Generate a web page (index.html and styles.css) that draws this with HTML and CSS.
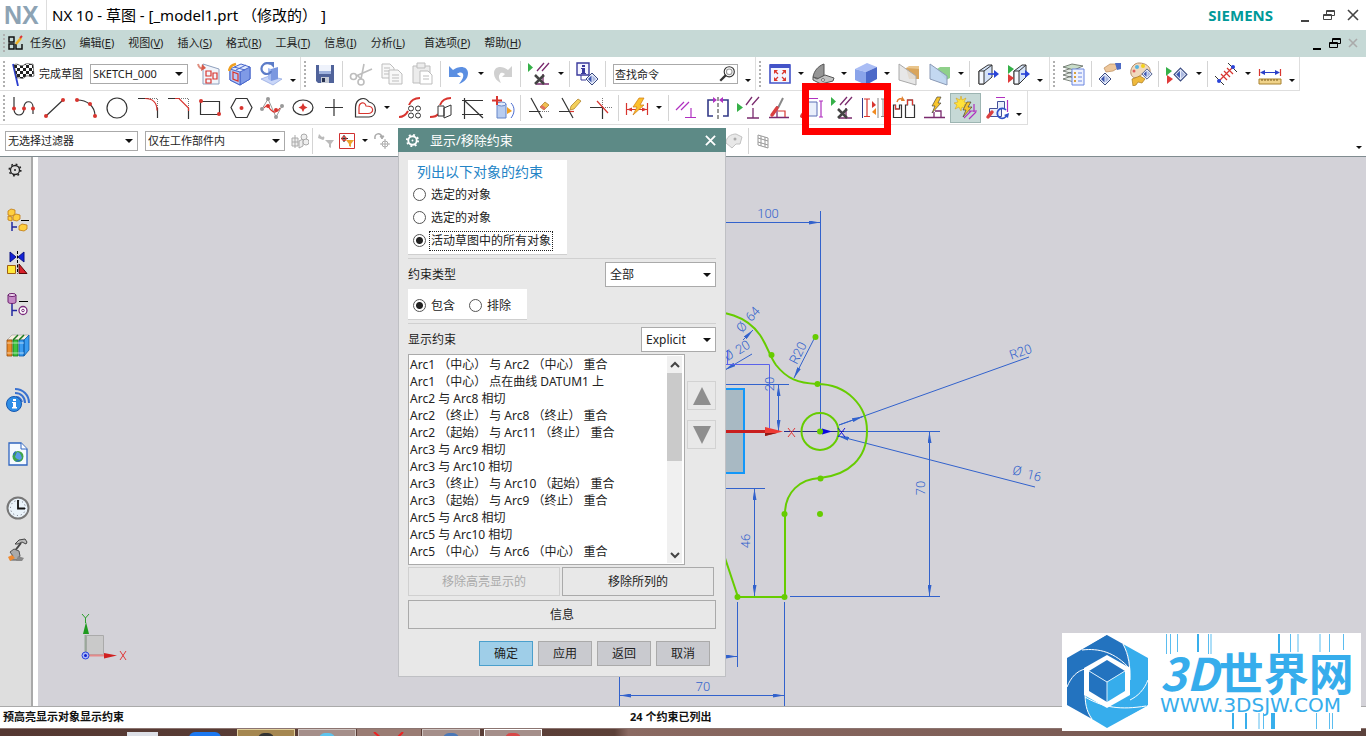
FILE: index.html
```html
<!DOCTYPE html>
<html lang="zh-CN">
<head>
<meta charset="utf-8">
<title>NX 10 - 草图 - [_model1.prt （修改的） ]</title>
<link rel="stylesheet" href="styles.css">
</head>
<body>
<svg class="defs" aria-hidden="true">
  <defs>
    <symbol id="i-remove-con" viewBox="0 0 24 24"><path class="gf" d="M1 1l5 4.500L1 10z"/><path class="p" d="M10 9l7-8M15 9l7-8M16 12v10M9 22h13"/><path class="x" d="M8 13l9 9M17 13l-9 9"/></symbol>
    <symbol id="i-cube" viewBox="0 0 24 24"><path fill="#aabdf5" d="M1 7L13 1l10 4-11 5z"/><path fill="#8aa4ea" d="M1 7l11 3v13L1 18z"/><path fill="#4c69c8" d="M12 10l11-5v12l-11 6z"/></symbol>
    <symbol id="i-diamond" viewBox="0 0 14 14"><path fill="#e6ecfa" stroke="#3a4a80" d="M7 1l6 6-6 6-6-6z"/><path fill="#3c56b0" d="M6.500 3.500v7L3 7z"/><path fill="#aab8e0" d="M7.500 3.500v7L11 7z"/></symbol>
    <symbol id="i-restore" viewBox="0 0 12 12"><path fill="none" stroke="currentColor" stroke-width="1" d="M.5 5.500h8v5h-8zM.5 6.500h8M3.500 5V1.500h8v5H9M3.500 2.500h8"/></symbol>
    <pattern id="chk" width="6" height="6" patternUnits="userSpaceOnUse"><path fill="#fff" d="M0 0h6v6H0z"/><path fill="#222" d="M0 0h3v3H0zM3 3h3v3H3z"/></pattern>
    <marker id="arr" viewBox="0 0 11 4" refX="11" refY="2" markerWidth="11" markerHeight="4" markerUnits="userSpaceOnUse" orient="auto-start-reverse"><path fill="#3262cc" d="M0 0l11 2-11 2z"/></marker>
  </defs>
</svg>
<div class="app">
  <header class="titlebar">
    <span class="nx">NX</span>
    <h1>NX 10 - 草图 - [_model1.prt （修改的） ]</h1>
    <span class="brand">SIEMENS</span>
    <div class="winctl">
      <button aria-label="最小化"><i class="min"></i></button>
      <button aria-label="还原"><svg width="12" height="12"><use href="#i-restore"/></svg></button>
      <button aria-label="关闭"><svg width="12" height="12" viewBox="0 0 12 12"><path stroke="currentColor" stroke-width="1.600" d="M1 1l10 10M11 1L1 11"/></svg></button>
    </div>
  </header>

  <nav class="menubar">
    <i class="grip"></i>
    <svg class="appicon" viewBox="0 0 16 16"><path fill="none" stroke="#111" stroke-width="1.500" d="M1 2h5v5H1zM1 9h5v5H1zM8 9v5h6V9"/><path stroke="#f0b020" stroke-width="2.500" d="M8 9l5-6"/><path stroke="#d33" stroke-width="2" d="M12 3l2-2"/></svg>
    <div class="menus">
      <a href="#">任务(<u>K</u>)</a><a href="#">编辑(<u>E</u>)</a><a href="#">视图(<u>V</u>)</a><a href="#">插入(<u>S</u>)</a><a href="#">格式(<u>R</u>)</a><a href="#">工具(<u>T</u>)</a><a href="#">信息(<u>I</u>)</a><a href="#">分析(<u>L</u>)</a><a href="#" class="wide">首选项(<u>P</u>)</a><a href="#">帮助(<u>H</u>)</a>
    </div>
    <div class="winctl child">
      <button aria-label="最小化文档"><i class="min"></i></button>
      <button aria-label="还原文档"><svg width="12" height="12"><use href="#i-restore"/></svg></button>
      <button aria-label="关闭文档" disabled><svg width="10" height="10" viewBox="0 0 10 10"><path stroke="currentColor" stroke-width="1.600" d="M1 1l8 8M9 1L1 9"/></svg></button>
    </div>
  </nav>

  <div class="toolrow">
    <div class="group">
      <i class="grip"></i>
      <button class="finish"><svg class="i" viewBox="0 0 24 24"><path stroke="#2b3ed0" stroke-width="1.800" d="M2 2l5 22"/><path fill="url(#chk)" stroke="#222" stroke-width=".6" d="M3 3c4-3 6 3 10 0s6 0 9-1l1 12c-4 2-6-2-9 1s-5 0-8 1z"/></svg><span>完成草图</span></button>
      <span class="combo sketch"><select aria-label="草图名称"><option>SKETCH_000</option></select></span>
      <button class="tb" aria-label="定向到草图"><svg class="i" viewBox="0 0 24 24"><path fill="#f2f5fb" stroke="#8fa0bd" d="M6 2l16 5v15H6z"/><path class="r" d="M9 9h5v5H9zM9 17h5v4H9zM16 11h4v6h-4z"/><path stroke="#e09080" fill="none" stroke-width="2" d="M1 2c1 4 3 5 6 4"/><path fill="#d75a4a" d="M5 2l4 4-5 3z"/></svg></button>
      <button class="tb" aria-label="定向到模型"><svg class="i" viewBox="0 0 24 24"><path fill="#dfe8fc" stroke="#4867cc" d="M2 7l11-5 9 3v12l-10 6-10-5z"/><path fill="#7f9ae6" stroke="#4867cc" d="M12 10l10-5v12l-10 6z"/><path fill="#b4c6f6" stroke="#4867cc" d="M2 7l10 3v13L2 18z"/><path fill="none" stroke="#4867cc" d="M6 5l11 3M18 3L8 8"/><path class="r" d="M5 10l5 2v7l-5-2z"/><path fill="none" stroke="#f0a020" stroke-width="2.500" d="M1 9c1-5 3-6 7-7"/></svg></button>
      <button class="tb" aria-label="重新附着"><svg class="i" viewBox="0 0 24 24"><path fill="#c9d6f8" stroke="#7f98da" stroke-width=".6" d="M2 17l8-3 13 3-9 6z"/><path fill="#7b98e0" d="M12 7l7-2v12l-7 2z"/><path fill="#a4bbf2" d="M9 6l3 1v12l-3-2z"/><path fill="none" stroke="#5c7cc8" stroke-width="2.200" d="M12 2C6-1 1 4 3 9c2 4 8 4 9 0"/><path fill="#5c7cc8" d="M9 0h6v6z"/></svg></button>
      <button class="dd low" aria-label="更多"></button>
    </div>
    <div class="group">
      <i class="grip"></i>
      <button class="tb" aria-label="保存"><svg class="i" viewBox="0 0 24 24"><path fill="#50639a" d="M3 3h18v18H5l-2-2z"/><path fill="#eef2fb" d="M6 3h12v9H6z"/><path fill="#9fb2dd" d="M6 9h12v3H6z"/><path fill="#c6cbd6" d="M8 15h8v6H8z"/><path fill="#26314f" d="M9 16h3v4H9z"/></svg></button>
      <i class="sep"></i>
      <button class="tb" aria-label="剪切" disabled><svg class="i" viewBox="0 0 24 24"><g fill="none" stroke="#bdbdbd" stroke-width="1.600"><circle cx="4.500" cy="14.500" r="3"/><circle cx="12" cy="20" r="3"/><path d="M7 14l16-7M12 17l3-15M12 17l-4-4"/></g></svg></button>
      <button class="tb" aria-label="复制" disabled><svg class="i" viewBox="0 0 24 24"><g fill="#f8f8f8" stroke="#bdbdbd"><path d="M2 2h8l4 4v10H2z"/><path d="M9 8h9l4 4v10H9z"/><path d="M4 6h6M4 9h5M4 12h5M12 13h7M12 16h7M12 19h7"/></g></svg></button>
      <button class="tb" aria-label="粘贴" disabled><svg class="i" viewBox="0 0 24 24"><g fill="#ececec" stroke="#bdbdbd"><path d="M2 4h17v17H2z"/><path d="M6 1h8v5H6z"/><path fill="#fff" d="M9 9h8l4 4v9H9zM12 14h6M12 17h6"/></g></svg></button>
      <i class="sep"></i>
      <button class="tb" aria-label="撤销"><svg class="i" viewBox="0 0 24 24"><path fill="#5b8fe2" d="M2 4l4 4c6-5 15-4 15 3 0 6-4 9-9 11 3-4 5-7 4-10-1-2-4-2-6 0l4 3H2z"/></svg></button>
      <button class="dd" aria-label="撤销列表"></button>
      <button class="tb" aria-label="重做" disabled><svg class="i" viewBox="0 0 24 24"><path fill="#d0d0d0" d="M21 4l-4 4C11 3 3 4 3 11c0 5 3 8 7 10-2-4-3-7-1-9 1-2 3-1 5 0l-3 3h10z"/></svg></button>
      <i class="sep"></i>
      <button class="tb" aria-label="显示/移除约束"><svg class="i"><use href="#i-remove-con"/></svg></button>
      <button class="dd" aria-label="约束列表"></button>
      <i class="sep"></i>
      <button class="tb" aria-label="信息"><svg class="i" viewBox="0 0 24 24"><path fill="#f5f5ff" stroke="#3a3a9c" stroke-width="1.400" d="M1 1h12v12H1z"/><path fill="#3a3a9c" d="M6 3h3v2H6zM5 6h4v5h1v1H5v-1h1V7H5z"/><path fill="none" stroke="#3a3a9c" d="M5 13v5h5"/><use href="#i-diamond" x="9" y="10" width="14" height="14"/></svg></button>
      <i class="sep"></i>
      <label class="search"><input type="text" value="查找命令" aria-label="查找命令"><svg class="lens" viewBox="0 0 16 16"><g fill="none" stroke="#333"><circle cx="10" cy="6" r="4.500"/><circle cx="10" cy="6" r="2.500" stroke="#999"/><path stroke-width="2" d="M7 9l-5 5"/></g></svg></label>
      <button class="dd low" aria-label="更多"></button>
    </div>
    <div class="group tight">
      <i class="grip"></i>
      <button class="tb" aria-label="适合窗口"><svg class="i" viewBox="0 0 24 24"><path fill="#f2f5ff" stroke="#4353c8" stroke-width="1.600" d="M2 3h20v18H2z"/><path fill="#4353c8" d="M2 2h20v4H2z"/><g fill="#df3a2c"><path d="M6 8h4l-4 4zM18 8h-4l4 4zM6 19h4l-4-4zM18 19h-4l4-4z"/></g><path class="r" d="M7 9l3 3M17 9l-3 3M7 18l3-3M17 18l-3-3"/></svg></button>
      <button class="dd" aria-label="视图"></button>
      <button class="tb" aria-label="编辑截面"><svg class="i" viewBox="0 0 24 24"><path fill="#959595" stroke="#555" d="M2 15C3 9 7 4 13 2v11l-4 4z"/><path fill="#c2c2c2" stroke="#555" d="M2 15l4 2 8-4 9 3-1 3-12 3-8-4z"/><circle cx="12" cy="18" r="1.500" fill="#eee" stroke="#777"/></svg></button>
      <button class="dd" aria-label="截面"></button>
      <button class="tb" aria-label="着色"><svg class="i"><use href="#i-cube"/></svg></button>
      <button class="dd" aria-label="渲染样式"></button>
      <button class="tb" aria-label="剪切截面"><svg class="i" viewBox="0 0 24 24"><path fill="#d9a55c" d="M9 6h13v11H12z"/><path fill="#e9c58c" d="M9 6l3-2h10v3z"/><path fill="#e3e3e3" fill-opacity=".85" stroke="#aaa" d="M2 2l17 12v9L2 18z"/></svg></button>
      <button class="tb" aria-label="编辑工作截面"><svg class="i" viewBox="0 0 24 24"><path fill="#8fd08a" d="M9 7l3-2h10v11l-4 2z"/><path fill="#bcd4f0" fill-opacity=".9" stroke="#8a99b5" d="M2 2l17 12v9L2 17z"/></svg></button>
      <button class="dd" aria-label="截面列表"></button>
      <i class="sep"></i>
      <button class="tb" aria-label="移动"><svg class="i" viewBox="0 0 24 24"><path fill="#d5e3f8" stroke="#333" d="M3 9l9-6h4v12l-8 7H3z"/><path fill="#f4f8ff" stroke="#333" d="M3 9h5v13H3zM8 9l8-6"/><path fill="none" stroke="#2a44d8" stroke-width="1.600" d="M12 12h7"/><path fill="#2a44d8" d="M18 8l5 4-5 4z"/></svg></button>
      <button class="tb" aria-label="移至图层"><svg class="i" viewBox="0 0 24 24"><path fill="#d5e3f8" stroke="#333" d="M7 9l8-6h4v12l-7 7H7z"/><path fill="#f4f8ff" stroke="#333" d="M7 9h5v13H7zM12 9l7-6"/><path class="gf" d="M1 3l6 4-6 5z"/><path fill="#df3a3a" d="M1 12l6 4-6 5z"/><path stroke="#2a44d8" stroke-width="1.600" d="M14 12h5"/><path fill="#2a44d8" d="M18 8l5 4-5 4z"/></svg></button>
      <button class="dd low" aria-label="更多"></button>
    </div>
    <div class="group">
      <i class="grip"></i>
      <button class="tb" aria-label="图层设置"><svg class="i" viewBox="0 0 24 24"><g fill="#e8eee8" stroke="#5d665d" stroke-width=".8"><path d="M1 17l9-3 11 2-9 4zM1 13l9-3 11 2-9 4zM1 9l9-3 11 2-9 4z"/><path fill="#c8dcc8" d="M1 5l9-3 11 2-9 4z"/></g><path fill="#eef2ff" stroke="#6a86e0" d="M10 7h12v16H10z"/><path stroke="#6a86e0" d="M16 11h4M16 15h4M16 19h4"/><path fill="#d8a040" d="M12 10h2v2h-2zM12 14h2v2h-2zM12 18h2v2h-2z"/></svg></button>
      <i class="sep"></i>
      <button class="tb" aria-label="显示和隐藏"><svg class="i" viewBox="0 0 24 24"><path fill="#eec79b" stroke="#b98a58" stroke-width=".7" d="M6 6l6-4h6l2 4-5 3-7 1z"/><path fill="#4d6bc4" d="M17 1h6v6l-4 1z"/><use href="#i-diamond" x="0" y="10" width="14" height="14"/></svg></button>
      <button class="tb" aria-label="编辑对象显示"><svg class="i" viewBox="0 0 24 24"><path fill="#f0d9bd" stroke="#b58d66" d="M10 1c7 0 12 4 11 9-2 4-6 1-9 3-3 1-2 3-5 3-4 0-6-4-5-8s4-7 8-7z"/><circle cx="8" cy="5" r="2" fill="#56b4e0"/><circle cx="14" cy="4" r="2" fill="#f3d21c"/><circle cx="5" cy="9" r="1.500" fill="#e05a5a"/><path fill="#efb93c" stroke="#a87a20" stroke-width=".7" d="M3 17l8-3 5 3-3 4-4-1-2 3-3 1z"/><use href="#i-diamond" x="12" y="6" width="12" height="12"/></svg></button>
      <i class="sep"></i>
      <button class="tb" aria-label="隐藏"><svg class="i" viewBox="0 0 24 24"><path class="gf" d="M1 5l6 4-6 5z"/><path fill="#df3a3a" d="M2 13l6 4-6 5z"/><use href="#i-diamond" x="8" y="5" width="15" height="15"/></svg></button>
      <button class="dd" aria-label="显示列表"></button>
      <i class="sep"></i>
      <button class="tb" aria-label="简单测量"><svg class="i" viewBox="0 0 24 24"><path stroke="#333" d="M1 14l9 9M14 1l9 9"/><path class="r" d="M5 19L19 5M7 12l6 6M10 9l6 6M13 6l6 6"/><circle cx="5" cy="19" r="2" fill="#2a44d8"/><circle cx="19" cy="5" r="2" fill="#2a44d8"/></svg></button>
      <button class="dd" aria-label="测量列表"></button>
      <button class="tb" aria-label="测量距离"><svg class="i" viewBox="0 0 24 24"><path class="r" d="M1.500 7v7M22.500 7v7"/><path stroke="#2a3fc8" d="M3 10.500h18"/><path fill="#2a3fc8" d="M2 10.500L7 8v5zM22 10.500L17 8v5z"/><path fill="#f0d38a" stroke="#a9822f" d="M1 17h22v5H1z"/><path stroke="#7a5a18" d="M4 17v2M7 17v2M10 17v2M13 17v2M16 17v2M19 17v2"/></svg></button>
      <button class="dd low" aria-label="更多"></button>
    </div>
  </div>

  <div class="toolrow">
    <div class="group loose">
      <i class="grip"></i>
      <button class="tb" aria-label="轮廓"><svg class="i" viewBox="0 0 24 24"><path class="k" d="M2 1v12c0 8 10 8 10 0V11c0-7 9-7 9 0v7"/><circle class="rf" cx="2" cy="12.500" r="2"/><circle class="rf" cx="12" cy="12.500" r="2"/><circle class="rf" cx="21" cy="12.500" r="2"/></svg></button>
      <button class="tb" aria-label="直线"><svg class="i" viewBox="0 0 24 24"><path class="k" d="M3 20L20 4"/><circle class="rf" cx="3" cy="20" r="2"/><circle class="rf" cx="20" cy="4" r="2"/></svg></button>
      <button class="tb" aria-label="圆弧"><svg class="i" viewBox="0 0 24 24"><path class="k" d="M3 4c10 0 18 6 18 16"/><circle class="rf" cx="3" cy="4" r="2"/><circle class="rf" cx="16" cy="8" r="2"/><circle class="rf" cx="21" cy="20" r="2"/></svg></button>
      <button class="tb" aria-label="圆"><svg class="i" viewBox="0 0 24 24"><circle class="k" cx="12" cy="12" r="10"/></svg></button>
      <button class="tb" aria-label="圆角"><svg class="i" viewBox="0 0 24 24"><path class="k" d="M2 2.500h10M21.500 12v10"/><path class="dot" d="M12 2.500h9.500V12"/><path class="r" d="M9 2.500c8 0 12 4 12 12"/></svg></button>
      <button class="tb" aria-label="倒斜角"><svg class="i" viewBox="0 0 24 24"><path class="k" d="M1 2.500h11M21.500 12v11"/><path class="dot" d="M12 2.500h9.500V12"/><path class="r" d="M8 2.500h4l9.500 9.500v3"/></svg></button>
      <button class="tb" aria-label="矩形"><svg class="i" viewBox="0 0 24 24"><path class="k" d="M2.500 5.500h19v13h-19z"/><circle class="rf" cx="3" cy="5" r="2"/><circle class="rf" cx="21" cy="18" r="2"/></svg></button>
      <button class="tb" aria-label="多边形"><svg class="i" viewBox="0 0 24 24"><path class="k" d="M7 2.500h11l5 9-5 10H7l-5-10z"/><circle class="rf" cx="12.500" cy="12" r="2"/></svg></button>
      <button class="tb" aria-label="艺术样条"><svg class="i" viewBox="0 0 24 24"><path fill="none" stroke="#999" d="M2 13L8 3l8 18 6-11"/><path class="r" d="M4 12c4-5 4-1 7 2s6 3 9-2"/><g fill="#999"><circle cx="2" cy="13" r="2"/><circle cx="8" cy="3" r="2"/><circle cx="16" cy="21" r="2"/><circle cx="22" cy="10" r="2"/></g><circle class="rf" cx="8" cy="10" r="2"/><circle class="rf" cx="16" cy="14" r="2"/></svg></button>
      <button class="tb" aria-label="椭圆"><svg class="i" viewBox="0 0 24 24"><ellipse class="k" cx="12" cy="11.500" rx="10" ry="7.500"/><path class="rf" d="M12 7l1.500 3 3 1.500-3 1.500-1.500 3-1.500-3-3-1.500 3-1.500z"/></svg></button>
      <button class="tb" aria-label="点"><svg class="i" viewBox="0 0 24 24"><path class="k" d="M12 3v17M3 11.500h18"/></svg></button>
      <button class="tb" aria-label="偏置曲线"><svg class="i" viewBox="0 0 24 24"><path class="k" d="M2.500 21V11C3 2 12 0 16 6c9 2 8 15 0 15z"/><path class="r" d="M6 17.500V12c0-6 6-7 7-2 9 0 8 7.500 2 7.500z"/></svg></button>
      <button class="dd" aria-label="曲线列表"></button>
      <button class="tb" aria-label="阵列曲线"><svg class="i" viewBox="0 0 24 24"><path class="r thick" d="M1 21c5 0 7-2 9-6M11 9c2-5 5-7 11-7"/><g fill="#fff" stroke="#333"><circle cx="13" cy="12.500" r="2.500"/><circle cx="20" cy="12.500" r="2.500"/><circle cx="13" cy="19.500" r="2.500"/><circle cx="20" cy="19.500" r="2.500"/></g></svg></button>
      <button class="tb" aria-label="镜像曲线"><svg class="i" viewBox="0 0 24 24"><path class="r thick" d="M1 21c4 0 7-1 8-3M11 9c2-5 5-7 11-7"/><path fill="#fff" stroke="#333" d="M9 10h6v10H9zM15 12l7-3v10l-7 3z"/></svg></button>
      <button class="tb" aria-label="交点"><svg class="i" viewBox="0 0 24 24"><path class="k" d="M4.500 2v21M2 4.500h21M2 18.500h21M5 5l18 17"/></svg></button>
      <button class="tb" aria-label="投影曲线"><svg class="i" viewBox="0 0 24 24"><path fill="#b8cdf0" stroke="#6485c8" d="M6 8h9v14H6z"/><ellipse cx="10.500" cy="8" rx="4.500" ry="2" fill="#e2ecfb" stroke="#6485c8"/><path class="r thick" d="M6 0v9M1 4.500h10"/><path fill="none" stroke="#4a6bd0" d="M20 7c4 4 4 10 0 15"/><path fill="#f0a020" d="M16 11l5 4-5 3z"/></svg></button>
      <i class="sep"></i>
      <button class="tb" aria-label="快速修剪"><svg class="i" viewBox="0 0 24 24"><path class="k" d="M4 2l11 20M2 15.500h11"/><path class="dot" d="M13 15.500h10"/><path fill="#f0c050" stroke="#a87820" stroke-width=".7" d="M13 11l5-5 4 3-5 5z"/><path fill="#e07060" d="M13 11l2-2 4 3-2 2z"/></svg></button>
      <button class="tb" aria-label="快速延伸"><svg class="i" viewBox="0 0 24 24"><path class="k" d="M4 2l11 20M1 15.500h11"/><path class="r" d="M12 15.500h4"/><path fill="#f3cf5a" stroke="#a87820" stroke-width=".7" d="M12 14l1-4 7-7 3 2-7 8z"/></svg></button>
      <button class="tb" aria-label="制作拐角"><svg class="i" viewBox="0 0 24 24"><path class="k" d="M1 11.500h13M13.500 11v12"/><path class="dot" d="M14 11.500h9M13.500 11V1"/><path class="r" d="M8 5l11 12"/></svg></button>
      <i class="sep"></i>
      <button class="tb" aria-label="快速尺寸"><svg class="i" viewBox="0 0 24 24"><path class="r" d="M1.500 7v12M22.500 7v12M2 13.500h20"/><path class="rf" d="M2 13.500l5-2v4zM22 13.500l-5-2v4z"/><path fill="#fbc02d" stroke="#d07a10" stroke-width=".7" d="M14 2h5l-4 7h4L8 19l4-8H8z"/></svg></button>
      <button class="dd" aria-label="尺寸列表"></button>
      <i class="sep"></i>
      <button class="tb" aria-label="几何约束"><svg class="i" viewBox="0 0 24 24"><path class="m" d="M1 14l8-8M6 14l8-8M16 12v9M10 21.500h11"/></svg></button>
      <button class="tb" aria-label="设为对称"><svg class="i" viewBox="0 0 24 24"><path fill="none" stroke="#333a88" stroke-width="1.600" d="M7 4H2v16h5M17 4h5v16h-5"/><path fill="none" stroke="#333" stroke-dasharray="4 2" d="M12 1v22"/><path fill="#b030c0" d="M7 1l4 3-4 3zM17 1l-4 3 4 3z"/></svg></button>
      <button class="tb" aria-label="显示草图约束"><svg class="i" viewBox="0 0 24 24"><path class="gf" d="M0 7l6 4.500L0 16z"/><path class="p" d="M9 9l6-8M15 9l7-8M16 12v10M10 22h12"/></svg></button>
      <button class="tb" aria-label="约束设置"><svg class="i" viewBox="0 0 24 24"><path class="p" d="M9 10v11M1 21.500h20"/><path class="r" d="M10 15h7v6"/><path stroke="#888" stroke-width="2" d="M15 2l-5 10"/><path stroke="#d94040" stroke-width="3.500" stroke-linecap="round" d="M9 12l-5 7"/></svg></button>
      <button class="tb" aria-label="自动尺寸"><svg class="i" viewBox="0 0 24 24"><path fill="#eaf0fb" stroke="#5a6fb5" d="M9 6h9v14H9z"/><path class="m" d="M8 2.500h11M22 5v16M20 5h4M20 21h4"/><path stroke="#d94040" stroke-width="4" stroke-linecap="round" d="M7 14l-4 6"/></svg></button>
      <button class="tb" aria-label="显示/移除约束"><svg class="i"><use href="#i-remove-con"/></svg></button>
      <button class="tb" aria-label="动画尺寸"><svg class="i" viewBox="0 0 24 24"><path stroke="#333a88" d="M1.500 2v20"/><path class="r" d="M6 3v17M3 3h6M3 20.500h6"/><path fill="none" stroke="#888" d="M17 2v20M22 3v17M20 3h4M20 20.500h4"/><path class="rf" d="M11 5l4 4-4 3z"/><path fill="#f08a20" d="M15 12l-4 4 4 3z"/></svg></button>
      <button class="tb" aria-label="转换参考"><svg class="i" viewBox="0 0 24 24"><path class="k" d="M1.500 9v12.500h8V9h-2v4h-4V9zM13.500 11v10.500h9V9h-2V4h-5v5h-2z"/><path class="r" d="M3.500 9v4h4M15.500 9V4h5v5"/><path fill="none" stroke="#e08030" stroke-width="1.500" d="M5 6c1-4 4-4 7-2"/><path fill="#e08030" d="M10 0l3 5-4 0z"/></svg></button>
      <button class="tb" aria-label="自动判断约束"><svg class="i" viewBox="0 0 24 24"><path class="p" d="M1 21.500h21M11 16v6"/><path class="p" d="M12 15h6v6"/><path fill="#f7c52c" stroke="#333" stroke-width=".6" d="M14 1h4l-3 6h3L9 17l3-7H9z"/></svg></button>
      <button class="tb on" aria-label="创建自动判断约束" aria-pressed="true"><svg class="i" viewBox="0 0 24 24"><path class="m" d="M10 22l7-7M15 23l7-7M20 8v8M15 15h8"/><path fill="#ffe23a" stroke="#d09a10" stroke-width=".5" d="M7 0l1 4 4-2-2 4 4 1-4 2 2 4-4-2-1 4-2-4-4 2 2-4-3-2 4-1-2-4 4 2z"/><path fill="#f7c52c" stroke="#333" stroke-width=".6" d="M13 6h4l-3 5h4L9 21l3-7H9z"/></svg></button>
      <button class="tb" aria-label="连续自动标注"><svg class="i" viewBox="0 0 24 24"><path fill="#eaf0fb" stroke="#44509a" d="M12.500 5.500h7v7h-3v8h-12v-8h8z"/><path class="m" d="M11 1.500h9M22.500 4v12"/><path fill="none" stroke="#2f50c8" stroke-width="1.800" d="M21 14a5 5 0 1 0 1 5"/><path fill="#2f50c8" d="M24 17l-1 5-4-3z"/><path stroke="#d94040" stroke-width="3.500" stroke-linecap="round" d="M7 16l-4 5"/></svg></button>
      <button class="dd low" aria-label="更多"></button>
      <div class="callout"></div>
    </div>
  </div>

  <div class="toolrow filters">
    <span class="combo f1"><select aria-label="类型过滤器"><option>无选择过滤器</option></select></span>
    <span class="combo f2"><select aria-label="选择范围"><option>仅在工作部件内</option></select></span>
    <button class="sb" aria-label="装配过滤" disabled><svg viewBox="0 0 18 18"><g fill="#eee" stroke="#aaa"><path d="M1 6h6v8H1zM4 3v13M1 10h6M8 9l4-2v7l-4 2z"/><circle cx="13" cy="5" r="3"/><circle cx="15" cy="10" r="3"/></g></svg></button>
    <i class="sep"></i>
    <button class="sb narrow" aria-label="过滤器" disabled><svg viewBox="0 0 18 18"><path fill="#bbb" d="M2 2l3 3c3-2 3 2 1 3L1 6zM8 8h9l-3 4v4l-2-1v-3z"/></svg></button>
    <button class="sb" aria-label="常规选择过滤器"><svg viewBox="0 0 18 18"><path fill="#fff" stroke="#d03030" d="M1.500 1.500h15v15h-15z"/><path class="k" d="M6 3v7M3 6.500h7"/><circle class="r" cx="6" cy="6.500" r="2"/><path fill="#eba32e" d="M8 8h8l-3 4v3l-2-1v-2z"/></svg></button>
    <button class="dd" aria-label="过滤器列表"></button>
    <button class="sb" aria-label="重置过滤器" disabled><svg viewBox="0 0 18 18"><g fill="none" stroke="#aaa"><path stroke-width="1.500" d="M2 7C1 1 8 0 9 5"/><path fill="#aaa" d="M7 4h4L9 7z"/><circle cx="12" cy="12" r="3"/><path d="M12 7v10M7 12h10"/></g></svg></button>
    <div class="tail">
      <button class="sb" aria-label="面选择" disabled><svg viewBox="0 0 18 18"><path fill="#e8e8e8" stroke="#c2c2c2" d="M1 11C1 5 6 2 11 2l6 3-2 7-4 0-4 4z"/><circle cx="10" cy="7" r="1.500" fill="#aaa"/></svg></button>
      <i class="sep"></i>
      <button class="sb" aria-label="网格" disabled><svg viewBox="0 0 18 18"><path fill="none" stroke="#999" d="M4 3l10 3v10L4 13zM7 4v10M11 5v10M4 6l10 3M4 10l10 3"/></svg></button>
    </div>
    <button class="dd low end" aria-label="更多"></button>
  </div>

  <main class="work">
    <aside class="rail">
      <button class="opt" aria-label="资源条选项"><svg viewBox="0 0 24 24"><g fill="none" stroke="#222"><circle cx="9" cy="12" r="4.500" stroke-width="1.300"/><circle cx="9" cy="12" r="5.800" stroke-width="1.500" stroke-dasharray="1.800 2.750"/></g><circle cx="9" cy="12" r="1" fill="#222"/></svg></button>
      <button class="first" aria-label="装配导航器"><svg viewBox="0 0 24 24"><g fill="#ffcf3f" stroke="#c07a10" stroke-width=".8"><path d="M2 3l3-2 4 1v4L6 8 2 7zM2 8l4 1v4l-4-1zM7 8l3-2 4 1v4l-3 2-4-1z"/><path d="M13 18l3-2 5 1v4l-3 2-5-1z"/></g><path stroke="#2228a0" stroke-width="1.500" d="M6 14v9M6 19h5"/><path stroke="#000" d="M15 12.500h8"/></svg></button>
      <button aria-label="约束导航器"><svg viewBox="0 0 24 24"><path fill="#1222d8" stroke="#0a1280" d="M4 2l6 5-6 5zM18 2l-6 5 6 5z"/><path stroke="#000" stroke-dasharray="3 1.500" d="M11.500 1v23"/><path fill="#ffe93a" stroke="#a06010" d="M1.500 15.500h8v8h-8z"/><path fill="#d8202a" stroke="#5a0808" d="M13 14l8 9.500h-8z"/></svg></button>
      <button aria-label="部件导航器"><svg viewBox="0 0 24 24"><path fill="#c58ac6" stroke="#6a1f6c" d="M2 3v7c0 2 8 2 8 0V3"/><ellipse cx="6" cy="3" rx="4" ry="1.500" fill="#f3dcf3" stroke="#6a1f6c"/><path stroke="#000" d="M13 9.500h9"/><path stroke="#2228a0" stroke-width="1.500" d="M6 12v12M6 18.500h5"/><circle cx="17" cy="18.500" r="4" fill="#fff" stroke="#7a2a7c" stroke-width="1.300"/><circle cx="17" cy="18.500" r="1.300" fill="none" stroke="#7a2a7c"/></svg></button>
      <button aria-label="重用库"><svg viewBox="0 0 24 24"><path fill="#f7efe0" stroke="#888" stroke-width=".5" d="M1 6l5-5h17l-5 5z"/><path fill="#e88b2a" stroke="#9b4d0a" stroke-width=".8" d="M1 6h5v16H1z"/><path fill="#3fc23f" stroke="#157a1a" stroke-width=".8" d="M7 6h5v16H7z"/><path fill="#3a9cf0" stroke="#0d5aa8" stroke-width=".8" d="M13 6h5v16h-5zM18 6l5-5v15l-5 6z"/><path stroke="#fff" stroke-opacity=".6" d="M1 9h17M1 19h17"/><path stroke="#187a1c" stroke-width="1.500" d="M7 6l5-5M13 6l5-5"/></svg></button>
      <button class="gap" aria-label="HD3D 工具"><svg viewBox="0 0 24 24"><g fill="none" stroke="#3a72d0" stroke-width="2"><path d="M9 1c8 0 14 6 14 14M9 5c6 0 10 4 10 10M10 9c3 0 5 2 6 5"/></g><circle cx="8" cy="16" r="7.500" fill="#2e8ee6" stroke="#1557b0"/><path fill="#fff" d="M7 11h3v2H7zM6 14h4v5h1v1.500H6V19h1v-4H6z"/></svg></button>
      <button class="gap" aria-label="Web 浏览器"><svg viewBox="0 0 24 24"><path fill="#f5faff" stroke="#2f65c0" stroke-width="1.300" d="M3 1h12l6 6v16H3z"/><path fill="#fff" stroke="#2f65c0" d="M15 1v6h6"/><circle cx="12" cy="14.500" r="5.500" fill="#3fa548"/><path fill="#5a9ae8" d="M11 10c3 0 4 3 5 6l-2 2-3-1-2-2z"/><path fill="#2f68c8" d="M7 12c1-2 2-3 3-3l-2 5zM9 19c2 1 4 1 6-1l-2 0z"/></svg></button>
      <button class="gap" aria-label="历史记录"><svg viewBox="0 0 24 24"><circle cx="12" cy="12" r="10.500" fill="#eaf3fa" stroke="#777" stroke-width="2"/><circle cx="12" cy="12" r="7.500" fill="none" stroke="#667" stroke-dasharray="1 2.930"/><path fill="none" stroke="#111" stroke-width="1.800" d="M12 4v8.500h7"/></svg></button>
      <button aria-label="角色"><svg viewBox="0 0 24 24"><path fill="none" stroke="#444" stroke-width="2" d="M8 14l7-9"/><path fill="#bbb" stroke="#444" d="M9 6l4-4 6-1 2 3-1 2-4-2-4 2z"/><path fill="#aaa" stroke="#555" d="M4 14l4-3 5 2 1 5-3 4H4l3-4z"/><path fill="#f08a30" d="M2 19l4-2 3 3-5 3z"/><path fill="#888" d="M12 18l6 2-2 3h-6z"/></svg></button>
    </aside>
    <section class="canvas">
      <svg class="drawing" role="img" aria-label="草图">
        <g transform="translate(-38 -157)">
          <path fill="#a8b9c3" d="M700 389h44v84h-44z"/>
          <path fill="none" stroke="#1397f8" stroke-width="2" d="M700 389h44v84h-44"/>
          <g class="dim">
            <path d="M820.500 211v221M726 384.500h63M726 488.500h39M790 596.500h150M840 431.500h100M737.500 602v65M784.500 602v105M619.500 670v37"/>
            <path marker-end="url(#arr)" d="M700 222.500h120"/>
            <path marker-end="url(#arr)" d="M700 656.500h37"/>
            <path marker-start="url(#arr)" marker-end="url(#arr)" d="M778.500 385v46"/>
            <path marker-start="url(#arr)" marker-end="url(#arr)" d="M754.500 489v107"/>
            <path marker-start="url(#arr)" marker-end="url(#arr)" d="M929.500 432v164"/>
            <path marker-start="url(#arr)" marker-end="url(#arr)" d="M620 695.500h164"/>
            <path marker-end="url(#arr)" d="M815 337l-21 41"/>
            <path d="M839 425l190-68"/>
            <path marker-end="url(#arr)" d="M839 425l24-8.500"/>
            <path marker-end="url(#arr)" d="M743 340l10-10"/>
            <path marker-end="url(#arr)" d="M752 354l-27 16"/>
            <path marker-start="url(#arr)" d="M838 436l197 51"/>
          </g>
          <path fill="none" stroke="#5a62ea" d="M726 364.500h43.500V428M727.500 350v14"/>
          <path stroke="#222c88" d="M784 431.500h60"/>
          <g class="sketch-line">
            <path d="M700 311c24 0 46 4 60 24 8 12 9 20 16 30 11 14 22 18 41 19 30 0 50 22 50 47 0 27-18 44-47 47-20 1-35 14-35 36v83h-47l-12-36-8-24"/>
            <circle cx="820" cy="431.500" r="18.500"/>
          </g>
          <g fill="#66cc00"><circle cx="771.500" cy="355" r="3"/><circle cx="815.500" cy="337" r="3"/><circle cx="817.500" cy="384" r="3"/><circle cx="820.500" cy="478.500" r="3"/><circle cx="820" cy="514" r="3"/><circle cx="784.500" cy="514" r="3"/><circle cx="784.500" cy="597" r="3"/><circle cx="737.500" cy="597" r="3"/></g>
          <path fill="#0a0ae0" d="M822 428.500l10 3-10 3z"/>
          <circle cx="820" cy="431.500" r="3" fill="#66cc00"/>
          <path stroke="#c81e1e" stroke-width="3" d="M700 431.500h66"/>
          <path fill="#ee3a34" d="M765 427l18 4.500-18 4.500z"/><path fill="#8e1c18" d="M765 433h12l-12 3z"/>
          <path stroke="#e03a3a" d="M788 428l7 9M795 428l-7 9"/>
          <path stroke="#1414d8" d="M838 428l7 9M845 428l-7 9"/>
          <g class="dimtext">
            <text x="768" y="218">100</text>
            <text transform="translate(756 317) rotate(-48)">64</text>
            <text transform="translate(745 330) rotate(-48)">Ø</text>
            <text transform="translate(745 351) rotate(-32)">20</text>
            <text transform="translate(731 359) rotate(-32)">Ø</text>
            <text transform="translate(802 355) rotate(-63)">R20</text>
            <text transform="translate(774 384) rotate(-90)">20</text>
            <text transform="translate(1022 356) rotate(-19)">R20</text>
            <text transform="translate(1016 475) rotate(14)">Ø</text>
            <text transform="translate(1033 480) rotate(14)">16</text>
            <text transform="translate(925 488) rotate(-90)">70</text>
            <text transform="translate(750 541) rotate(-90)">46</text>
            <text x="703" y="691">70</text>
          </g>
          <path fill="#c9c9c9" stroke="#aaa" d="M86.500 635.500h17v19h-17z"/>
          <path stroke="#9aa89a" stroke-width="2" d="M85.500 655v-20"/><path fill="#1f9a1f" d="M83 634l3-12 3 12z"/>
          <path fill="none" stroke="#2da02d" d="M82 614l3.500 4 3.500-4M85.500 618v5"/>
          <path stroke="#e58a8a" stroke-width="2" d="M87 655.500h17"/><path fill="#d02020" d="M104 653l13 2.500-13 3z"/>
          <path stroke="#e03a3a" d="M120 651l6 9M126 651l-6 9"/>
          <circle cx="85.500" cy="655.500" r="3.500" fill="#aebcf4" stroke="#2b44e0"/><circle cx="85.500" cy="655.500" r="1.500" fill="#1022d0"/>
        </g>
      </svg>
    </section>
  </main>

  <footer class="status"><span>预高亮显示对象显示约束</span><span>24 个约束已列出</span></footer>

  <div class="taskbar">
    <i class="t0"></i><i class="t1"></i><i class="tile gold"><b class="dk"></b></i><i class="tile"><b class="cy"></b></i><i class="tile plain"><svg viewBox="0 0 40 6"><path stroke="#e22" stroke-width="2" d="M5 0l8 7M34 0l-7 7"/></svg></i><i class="tile"><b class="bl"></b></i><i class="tile lit"><b class="rd"></b></i>
    <time>20:14</time>
  </div>

  <form class="dialog" role="dialog" aria-labelledby="dlg-title">
    <div class="dlg-head">
      <svg viewBox="0 0 16 16"><g fill="none" stroke="#fff"><circle cx="8" cy="8" r="4.500" stroke-width="2"/><circle cx="8" cy="8" r="6" stroke-width="2" stroke-dasharray="2 2.710"/></g><circle cx="8" cy="8" r="1" fill="#fff"/></svg>
      <h2 id="dlg-title">显示/移除约束</h2>
      <button type="button" aria-label="关闭"><svg viewBox="0 0 12 12"><path stroke="#fff" stroke-width="2" d="M1 1l10 10M11 1L1 11"/></svg></button>
    </div>
    <div class="dlg-body">
      <fieldset class="card scope">
        <legend>列出以下对象的约束</legend>
        <label><input type="radio" name="scope"><span>选定的对象</span></label>
        <label><input type="radio" name="scope"><span>选定的对象</span></label>
        <label><input type="radio" name="scope" checked><span class="focus">活动草图中的所有对象</span></label>
      </fieldset>
      <hr>
      <div class="field"><label for="ctype">约束类型</label><span class="combo w-l"><select id="ctype"><option>全部</option></select></span></div>
      <div class="card inc">
        <label><input type="radio" name="inc" checked><span>包含</span></label>
        <label><input type="radio" name="inc"><span>排除</span></label>
      </div>
      <hr>
      <div class="field"><label for="cshow">显示约束</label><span class="combo w-s"><select id="cshow"><option>Explicit</option></select></span></div>
      <div class="listrow">
        <div class="listbox">
          <ul>
            <li>Arc1 （中心） 与 Arc2 （中心） 重合</li>
            <li>Arc1 （中心） 点在曲线 DATUM1 上</li>
            <li>Arc2 与 Arc8 相切</li>
            <li>Arc2 （终止） 与 Arc8 （终止） 重合</li>
            <li>Arc2 （起始） 与 Arc11 （终止） 重合</li>
            <li>Arc3 与 Arc9 相切</li>
            <li>Arc3 与 Arc10 相切</li>
            <li>Arc3 （终止） 与 Arc10 （起始） 重合</li>
            <li>Arc3 （起始） 与 Arc9 （终止） 重合</li>
            <li>Arc5 与 Arc8 相切</li>
            <li>Arc5 与 Arc10 相切</li>
            <li>Arc5 （中心） 与 Arc6 （中心） 重合</li>
          </ul>
          <div class="scroll"><svg viewBox="0 0 10 10"><path d="M1 7l4-4 4 4"/></svg><i></i><svg viewBox="0 0 10 10"><path d="M1 3l4 4 4-4"/></svg></div>
        </div>
        <div class="movers">
          <button type="button" aria-label="上移" disabled><svg viewBox="0 0 20 20"><path d="M10 1l9 18H1z"/></svg></button>
          <button type="button" aria-label="下移" disabled><svg viewBox="0 0 20 20"><path d="M10 19l9-18H1z"/></svg></button>
        </div>
      </div>
      <div class="pair"><button type="button" disabled>移除高亮显示的</button><button type="button">移除所列的</button></div>
      <button type="button" class="info">信息</button>
      <div class="actions"><button type="button" class="ok">确定</button><button type="button">应用</button><button type="button">返回</button><button type="button">取消</button></div>
    </div>
  </form>

  <div class="watermark">
    <svg viewBox="0 0 299 98">
      <g stroke="#5bbdf0" stroke-width="1"><path d="M104.500 1v20M108.500 1v20M115.500 1v18M146.500 1v20M149 1v20M228.500 1v18M236 1v18M258 1v18M267.500 1v18M281.500 1v16M197 80v16M201.500 80v16M254.500 80v16M267.500 80v16M270.500 80v16"/></g>
      <g stroke="#38afec" stroke-width="2"><path d="M136 1v18M217 1v19M171 80v16"/><path d="M184 80v16"/><path stroke-width="4" d="M211 80v16"/></g>
      <path fill="#2373bf" d="M45 2L5 25v47l40-24z"/>
      <path fill="#2373bf" d="M45 2l16 9c7 10 7 21 7 37L45 48 20 17z"/>
      <path fill="#36adec" d="M61 11l25 14v47L68 82c-12 6-25 4-45-8V62l45-14c1-14 0-26-7-37z"/>
      <path fill="#36adec" d="M23 66c16 12 35 10 62 7L45 95l-15-9c-6-8-7-14-7-20z"/>
      <path fill="#2373bf" d="M5 54c3-9 9-15 18-18v27c0 9 2 16 7 23L5 72z"/>
      <g fill="none" stroke="#fff"><path d="M20 17c17-2 33 2 48 19M61 11c6 11 7 23 7 36M86 47c-4 10-10 16-18 20M84 73c-25 4-42 2-61-9M30 86c-6-8-7-17-7-27M5 54c4-10 10-16 18-18"/></g>
      <path fill="#fff" d="M45 22l23 13v27L45 75 22 62V35z"/>
      <path fill="#2373bf" d="M45 27l18 11-18 11-18-11z"/><path fill="#2373bf" d="M27 38l18 11v20L27 58z"/><path fill="#36adec" d="M63 38L45 49v20l18-11z"/><path fill="none" stroke="#d8ecfa" d="M27 38l18 11 18-11M45 49v20"/>
    </svg>
    <div class="wm-text"><strong><em>3D</em>世界网</strong><span>WWW.3DSJW.COM</span></div>
  </div>
</div>
</body>
</html>
```

FILE: styles.css
```css
* { box-sizing: border-box; }
html, body { margin: 0; height: 100%; }
body { font: 11px/16px "Noto Sans", "Noto Sans CJK SC", sans-serif; color: #222; background: #fff; overflow: hidden; }
button { border: 0; padding: 0; background: none; color: inherit; font: inherit; display: flex; align-items: center; justify-content: center; flex: none; }
select, input { font: inherit; color: inherit; margin: 0; }
h1, h2, ul, fieldset, hr { margin: 0; padding: 0; font-weight: normal; }
svg { display: block; flex: none; }
.defs { position: absolute; width: 0; height: 0; }
.app { position: relative; height: 100vh; display: flex; flex-direction: column; }

/* shared icon strokes */
.k { fill: none; stroke: #333; stroke-width: 1.2; }
.r { fill: none; stroke: #d8352f; stroke-width: 1.2; }
.thick { stroke-width: 2; }
.rf { fill: #d8352f; stroke: none; }
.gf { fill: #35b048; }
.p { fill: none; stroke: #7a2a6e; stroke-width: 1.3; }
.m { fill: none; stroke: #b030c0; stroke-width: 1.2; }
.x { fill: none; stroke: #444; stroke-width: 2.5; }
.dot { fill: none; stroke: #777; stroke-dasharray: 1 1; }

/* title bar */
.titlebar { height: 30px; flex: none; display: flex; align-items: center; padding: 0 7px 0 4px; }
.nx { font: bold 25px/30px "Liberation Sans", Arial, sans-serif; color: #8da3b4; width: 43px; border-right: 1px solid #ddd; }
.titlebar h1 { font-size: 15px; line-height: 24px; color: #000; margin-left: 5px; flex: 1; white-space: nowrap; }
.brand { font: bold 15px/20px "Open Sans", sans-serif; color: #009999; margin-right: 26px; }
.winctl { display: flex; gap: 12px; color: #444; }
.winctl button { width: 12px; height: 14px; }
.winctl.child { gap: 6px; margin-left: auto; color: #000; padding-right: 7px; }
.winctl button:disabled { color: #aaa; }
.min { width: 8px; height: 2px; background: currentColor; align-self: flex-end; }

/* menu bar */
.menubar { height: 27px; flex: none; background: #c6d9d6; display: flex; align-items: center; padding-bottom: 2px; }
.grip { width: 2px; height: 26px; margin: 0 3px; flex: none; align-self: center; background: repeating-linear-gradient(#b0b0b0 0 2px, transparent 2px 4px); }
.menubar .grip { height: 18px; }
.appicon { width: 16px; height: 16px; }
.menus { display: flex; gap: 14px; margin-left: 6px; }
.menus a { color: #222; text-decoration: none; white-space: nowrap; }
.menus .wide { margin-left: 5px; }

/* tool rows */
.toolrow { flex: none; height: 34px; display: flex; }
.group { position: relative; display: flex; align-items: center; border: solid #dedede; border-width: 0 1px 1px 0; padding-right: 1px; }
.i { width: 24px; height: 24px; }
.tb { width: 31px; height: 30px; }
.tb.on { background: #c6d9d6; border: 1px solid #9db5b2; }
.dd { width: 13px; height: 30px; }
.dd::after { content: ""; border: 3px solid transparent; border-top-color: #111; border-bottom: 0; }
.dd.low { align-items: flex-end; padding-bottom: 7px; }
.tight { padding-right: 3px; }
.tight .dd { width: 12px; }
.loose .dd { width: 14px; }
.sep { width: 1px; height: 26px; margin: 0 2px; background: #d4d4d4; flex: none; align-self: center; }
.finish { gap: 4px; padding-left: 3px; height: 30px; }
.combo { position: relative; display: block; flex: none; }
.combo::after { content: ""; position: absolute; right: 5px; top: 50%; margin-top: -2px; border: 4px solid transparent; border-top-color: #111; border-bottom: 0; pointer-events: none; }
.combo select { appearance: none; display: block; width: 100%; height: 20px; border: 1px solid #aaa; border-radius: 0; background: #fff; padding: 0 2px; }
.sketch { width: 98px; margin: 0 5px 0 7px; }
.search { display: flex; align-items: center; width: 125px; height: 20px; border: 1px solid #aaa; margin: 0 3px 0 5px; }
.search input { border: 0; outline: 0; background: none; flex: 1; min-width: 0; padding: 0 1px; height: 18px; }
.lens { width: 18px; height: 18px; margin-right: 1px; }
.callout { position: absolute; left: 802px; top: -8px; width: 89px; height: 52px; border: 7px solid #f00; z-index: 2; pointer-events: none; }
.filters { height: 32px; align-items: center; padding-left: 5px; border-bottom: 1px solid #808c90; }
.f1 { width: 133px; margin-right: 7px; }
.f2 { width: 140px; margin-right: 5px; }
.sb { width: 20px; height: 20px; }
.sb.narrow { width: 22px; }
.sb svg { width: 18px; height: 18px; }
.filters .dd { width: 15px; }
.tail { display: flex; align-items: center; gap: 2px; margin-left: 332px; }
.filters .end { margin-left: auto; }

/* work area */
.work { flex: 1; min-height: 0; display: flex; }
.rail { width: 33px; flex: none; background: #dedede; border-right: 2px solid #a9a9a9; display: flex; flex-direction: column; }
.rail button { height: 42px; padding-left: 4px; }
.rail svg { width: 24px; height: 24px; }
.rail .opt { height: 26px; }
.rail .first { margin-top: 16px; }
.rail .gap { margin-top: 12px; }
.canvas { flex: 1; margin-left: 5px; background: #d3d2d8; overflow: hidden; }
.drawing { width: 100%; height: 100%; }
.dim { fill: none; stroke: #3262cc; stroke-width: 1; }
.sketch-line { fill: none; stroke: #66cc00; stroke-width: 2; }
.dimtext { font: 300 13px Roboto, sans-serif; fill: #3262cc; text-anchor: middle; }

/* status and taskbar */
.status { flex: none; height: 22px; border-top: 1px solid #aaa; background: #fff; display: grid; grid-template-columns: 46% 1fr; align-items: center; padding-left: 3px; font-weight: bold; color: #111; line-height: 14px; padding-bottom: 2px; }
.taskbar { flex: none; height: 8px; background: linear-gradient(90deg, #553832, #5c4038 45%, #8b6a62 46%, #7b5c55 80%, #5c423c); border-top: 1px solid #8b7470; display: flex; overflow: hidden; }
.taskbar i { flex: none; height: 8px; }
.taskbar .t0 { width: 31px; margin: 3px 31px 0 127px; background: #dcdfe6; }
.taskbar .t1 { width: 32px; margin: 3px 16px 0 0; border-radius: 6px 6px 0 0; background: #1c78f0; }
.taskbar .tile { width: 58px; margin-right: 1px; background: #a58f8a; border: 1px solid #cfc4c0; border-bottom: 0; display: flex; justify-content: center; }
.taskbar .gold { background: #a58750; border-color: #e0cf9c; margin-right: 3px; }
.taskbar .plain { background: #9a7c74; border: 0; width: 64px; }
.taskbar .lit { border-color: #fff; margin-left: 3px; }
.tile b { width: 16px; height: 6px; margin-top: 3px; border-radius: 8px 8px 0 0; }
.tile svg { width: 40px; height: 6px; margin-top: 3px; }
.dk { background: #333; }
.cy { background: #5cc4ee; }
.bl { background: #4a78b8; }
.rd { background: #d84848; }
.taskbar time { margin: 3px 30px 0 auto; color: #fff; }

/* dialog */
.dialog { position: absolute; left: 398px; top: 128px; width: 328px; background: #e8e8e8; border: 1px solid #bfc0c4; border-top: 0; font-size: 12px; z-index: 3; }
.dlg-head { height: 24px; margin: 0 -1px; background: #5d8a86; color: #fff; display: flex; align-items: center; padding: 0 10px 0 7px; }
.dlg-head > svg { width: 15px; height: 15px; }
.dlg-head h2 { font-size: 13px; line-height: 20px; margin-left: 10px; flex: 1; }
.dlg-head button svg { width: 11px; height: 11px; }
.dlg-body { padding: 8px 9px 10px; }
.card { background: #fff; border: 0; border-bottom: 1px solid #cfcfcf; }
.scope { width: 159px; padding: 0 0 2px 5px; min-width: 0; }
.scope legend { float: left; width: 100%; padding: 0 4px; font-size: 14px; line-height: 23px; color: #2384c6; }
.card label { display: flex; align-items: center; gap: 3px; height: 23px; clear: both; }
.card input { appearance: none; width: 13px; height: 13px; border: 1px solid #555; border-radius: 50%; background: #fff; }
.card input:checked { background: radial-gradient(#222 0 3px, #fff 4px); }
.card label span { padding: 0 1px; line-height: 18px; white-space: nowrap; border: 1px solid transparent; }
.card label .focus { border: 1px dotted #222; }
hr { border: 0; border-top: 1px solid #d0d0d0; margin: 3px 0; }
.field { display: flex; justify-content: space-between; align-items: center; }
.field select { height: 25px; padding: 0 4px; }
.w-l { width: 111px; }
.w-s { width: 75px; }
.inc { display: flex; gap: 12px; width: 119px; height: 31px; align-items: center; padding: 3px 0 0 5px; margin-top: 2px; }
.listrow { display: flex; gap: 2px; margin-top: 2px; }
.listbox { width: 277px; height: 211px; border: 1px solid #aaa; background: #fff; display: flex; justify-content: space-between; padding: 1px; }
.listbox ul { list-style: none; line-height: 17px; white-space: nowrap; }
.scroll { width: 15px; background: #f0f0f0; display: flex; flex-direction: column; align-items: center; margin-right: 1px; }
.scroll svg { width: 10px; height: 10px; margin: 4px 0 3px; }
.scroll path { fill: none; stroke: #444; stroke-width: 2; }
.scroll i { width: 100%; height: 88px; background: #cacaca; margin-bottom: auto; }
.movers { display: flex; flex-direction: column; gap: 10px; padding-top: 27px; }
.movers button { width: 29px; height: 29px; border: 1px solid #d2d2d2; }
.movers svg { width: 20px; height: 20px; fill: #8e8e8e; }
.pair { display: grid; grid-template-columns: 1fr 1fr; gap: 2px; margin: 2px 2px 4px 0; }
.pair button, .info { height: 29px; border: 1px solid #aaa; }
.pair button:disabled { border-color: #d0d0d0; color: #aaa; }
.info { width: 100%; }
.actions { display: flex; justify-content: flex-end; gap: 5px; margin: 12px 6px 0 0; }
.actions button { width: 54px; height: 25px; background: #c9cacf; border: 1px solid #aaa; }
.actions .ok { background: #9fcee8; border-color: #4a9fcc; }

/* watermark */
.watermark { position: absolute; right: 5px; bottom: 5px; width: 299px; height: 98px; background: #fff; z-index: 4; overflow: hidden; }
.watermark > svg { position: absolute; inset: 0; width: 100%; height: 100%; }
.wm-text { position: relative; padding: 14px 0 0 98px; color: #36adec; white-space: nowrap; }
.wm-text strong { display: block; font: bold 45px/50px "Noto Sans CJK SC", sans-serif; }
.wm-text span { display: block; font: 20px/16px "DejaVu Sans", sans-serif; }
```
